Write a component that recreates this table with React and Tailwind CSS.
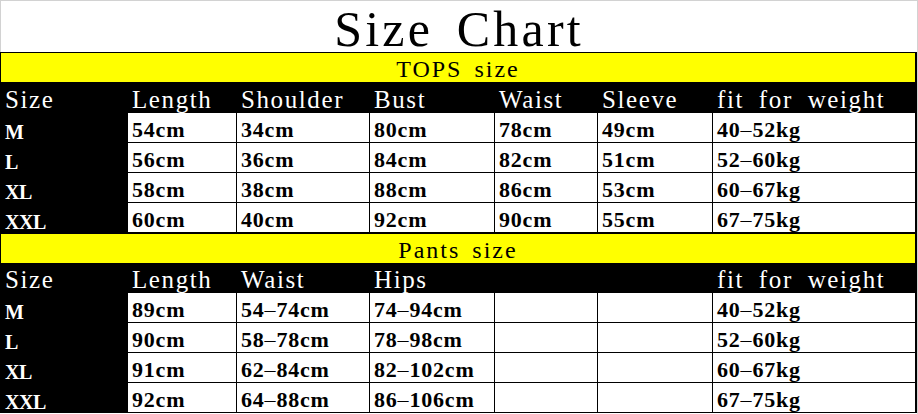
const serif = "font-['Liberation_Serif','Times_New_Roman',serif]";

const tops = [
  ["M", "54cm", "34cm", "80cm", "78cm", "49cm", "40–52kg"],
  ["L", "56cm", "36cm", "84cm", "82cm", "51cm", "52–60kg"],
  ["XL", "58cm", "38cm", "88cm", "86cm", "53cm", "60–67kg"],
  ["XXL", "60cm", "40cm", "92cm", "90cm", "55cm", "67–75kg"],
];

const pants = [
  ["M", "89cm", "54–74cm", "74–94cm", "", "", "40–52kg"],
  ["L", "90cm", "58–78cm", "78–98cm", "", "", "52–60kg"],
  ["XL", "91cm", "62–84cm", "82–102cm", "", "", "60–67kg"],
  ["XXL", "92cm", "64–88cm", "86–106cm", "", "", "67–75kg"],
];

const grid = "grid grid-cols-[127px_109px_133px_125px_103px_115px_1fr]";

function Band({ label }) {
  return (
    <div className={`h-[30px] border-t border-black bg-[#ffff00] flex items-end justify-center pb-[1px] text-[24px] leading-none tracking-[2px] [word-spacing:4px] text-black ${serif}`}>
      {label}
    </div>
  );
}

function Head({ cols, tall }) {
  return (
    <div className={`${grid} ${tall ? "h-[31px]" : "h-[30px]"} bg-black text-white text-[25px] leading-none tracking-[1.6px] ${serif}`}>
      {cols.map((c, i) => (
        <div key={i} className="flex items-end pl-1 pb-[1px] whitespace-nowrap [word-spacing:7px]">
          {c}
        </div>
      ))}
    </div>
  );
}

function Dash({ text }) {
  const parts = text.split("–");
  if (parts.length < 2) return text;
  return (
    <>
      {parts[0]}
      <span className="font-normal">–</span>
      {parts[1]}
    </>
  );
}

function DataRow({ row }) {
  return (
    <div className={`${grid} h-[30px] ${serif}`}>
      <div className="bg-black text-white font-bold text-[20px] leading-none tracking-[-0.5px] flex items-end pl-1 pb-[1px]">
        {row[0]}
      </div>
      {row.slice(1).map((v, i) => (
        <div
          key={i}
          className={`bg-white border-b border-black ${i < 5 ? "border-r" : ""} flex items-end pl-1 pb-[1px] text-black font-bold text-[22px] leading-none tracking-[0.8px] whitespace-nowrap`}
        >
          <Dash text={v} />
        </div>
      ))}
    </div>
  );
}

export default function App() {
  return (
    <div className="w-[918px] h-[414px] bg-white border-r border-[#d2d2d2] overflow-hidden">
      <div className={`h-[52px] border-t border-l border-[#d2d2d2] pt-[3px] text-center text-[50px] leading-none tracking-[3.2px] [word-spacing:8px] text-black ${serif}`}>
        Size Chart
      </div>
      <div className="border-l border-r-2 border-black">
        <Band label="TOPS size" />
        <Head tall cols={["Size", "Length", "Shoulder", "Bust", "Waist", "Sleeve", "fit for weight"]} />
        {tops.map((r) => (
          <DataRow key={r[0]} row={r} />
        ))}
        <Band label="Pants size" />
        <Head cols={["Size", "Length", "Waist", "Hips", "", "", "fit for weight"]} />
        {pants.map((r) => (
          <DataRow key={r[0]} row={r} />
        ))}
      </div>
    </div>
  );
}
